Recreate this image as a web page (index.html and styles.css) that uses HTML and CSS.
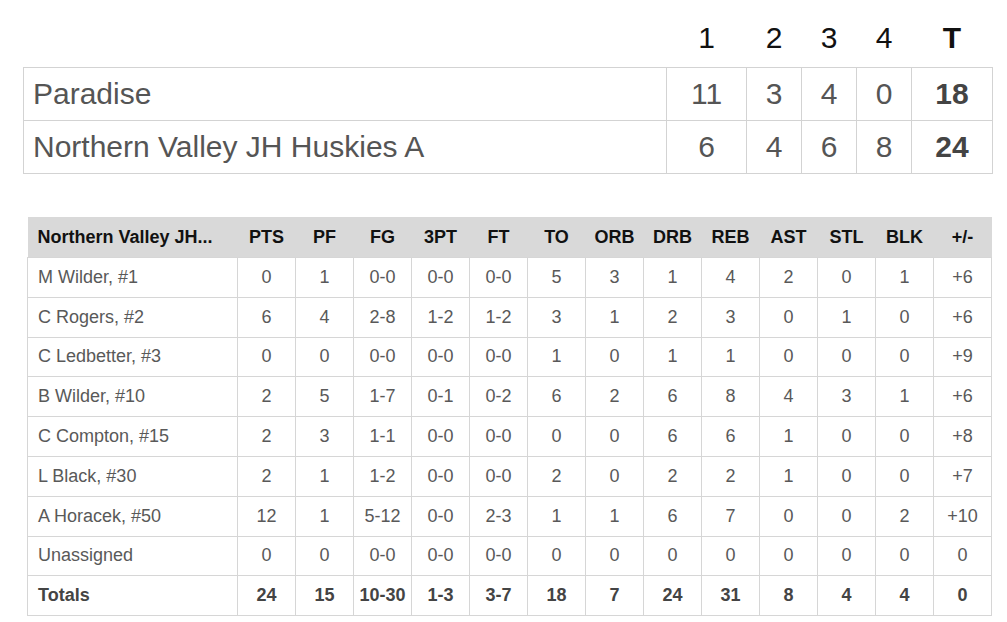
FILE: index.html
```html
<!DOCTYPE html>
<html>
<head>
<meta charset="utf-8">
<link rel="stylesheet" href="styles.css">
</head>
<body>
<div class="page">
  <table class="scoreboard">
    <colgroup>
      <col class="c-team"><col class="c-q1"><col class="c-q"><col class="c-q"><col class="c-q"><col class="c-t">
    </colgroup>
    <thead>
      <tr><th></th><th>1</th><th>2</th><th>3</th><th>4</th><th class="tot">T</th></tr>
    </thead>
    <tbody>
      <tr><td class="team">Paradise</td><td>11</td><td>3</td><td>4</td><td>0</td><td class="tot">18</td></tr>
      <tr><td class="team">Northern Valley JH Huskies A</td><td>6</td><td>4</td><td>6</td><td>8</td><td class="tot">24</td></tr>
    </tbody>
  </table>

  <table class="box">
    <colgroup>
      <col class="c-name">
      <col><col><col><col><col><col><col><col><col><col><col><col><col>
    </colgroup>
    <thead>
      <tr><th class="name">Northern Valley JH...</th><th>PTS</th><th>PF</th><th>FG</th><th>3PT</th><th>FT</th><th>TO</th><th>ORB</th><th>DRB</th><th>REB</th><th>AST</th><th>STL</th><th>BLK</th><th>+/-</th></tr>
    </thead>
    <tbody>
      <tr><td class="name">M Wilder, #1</td><td>0</td><td>1</td><td>0-0</td><td>0-0</td><td>0-0</td><td>5</td><td>3</td><td>1</td><td>4</td><td>2</td><td>0</td><td>1</td><td>+6</td></tr>
      <tr><td class="name">C Rogers, #2</td><td>6</td><td>4</td><td>2-8</td><td>1-2</td><td>1-2</td><td>3</td><td>1</td><td>2</td><td>3</td><td>0</td><td>1</td><td>0</td><td>+6</td></tr>
      <tr><td class="name">C Ledbetter, #3</td><td>0</td><td>0</td><td>0-0</td><td>0-0</td><td>0-0</td><td>1</td><td>0</td><td>1</td><td>1</td><td>0</td><td>0</td><td>0</td><td>+9</td></tr>
      <tr><td class="name">B Wilder, #10</td><td>2</td><td>5</td><td>1-7</td><td>0-1</td><td>0-2</td><td>6</td><td>2</td><td>6</td><td>8</td><td>4</td><td>3</td><td>1</td><td>+6</td></tr>
      <tr><td class="name">C Compton, #15</td><td>2</td><td>3</td><td>1-1</td><td>0-0</td><td>0-0</td><td>0</td><td>0</td><td>6</td><td>6</td><td>1</td><td>0</td><td>0</td><td>+8</td></tr>
      <tr><td class="name">L Black, #30</td><td>2</td><td>1</td><td>1-2</td><td>0-0</td><td>0-0</td><td>2</td><td>0</td><td>2</td><td>2</td><td>1</td><td>0</td><td>0</td><td>+7</td></tr>
      <tr><td class="name">A Horacek, #50</td><td>12</td><td>1</td><td>5-12</td><td>0-0</td><td>2-3</td><td>1</td><td>1</td><td>6</td><td>7</td><td>0</td><td>0</td><td>2</td><td>+10</td></tr>
      <tr><td class="name">Unassigned</td><td>0</td><td>0</td><td>0-0</td><td>0-0</td><td>0-0</td><td>0</td><td>0</td><td>0</td><td>0</td><td>0</td><td>0</td><td>0</td><td>0</td></tr>
      <tr class="totals"><td class="name">Totals</td><td>24</td><td>15</td><td>10-30</td><td>1-3</td><td>3-7</td><td>18</td><td>7</td><td>24</td><td>31</td><td>8</td><td>4</td><td>4</td><td>0</td></tr>
    </tbody>
  </table>
</div>
</body>
</html>
```

FILE: styles.css
```css
html, body {
  margin: 0;
  padding: 0;
  background: #ffffff;
}

body {
  font-family: "Liberation Sans", Arial, sans-serif;
  color: #555555;
}

.page {
  padding: 21px 0 0 0;
}

table {
  border-collapse: collapse;
  table-layout: fixed;
}

/* Scoreboard */
.scoreboard {
  margin-left: 23px;
  width: 970px;
  font-size: 30px;
}

.scoreboard .c-team { width: 643px; }
.scoreboard .c-q1 { width: 80px; }
.scoreboard .c-q { width: 55px; }
.scoreboard .c-t { width: 81px; }

.scoreboard th {
  font-weight: normal;
  color: #111111;
  line-height: 34px;
  padding: 0 0 12px 0;
  text-align: center;
}

.scoreboard th.tot {
  font-weight: bold;
}

.scoreboard td {
  border: 1px solid #d3d3d3;
  height: 52px;
  padding: 0;
  text-align: center;
  line-height: 34px;
  color: #555555;
}

.scoreboard td.team {
  text-align: left;
  padding-left: 9px;
}

.scoreboard td.tot {
  font-weight: bold;
  color: #444444;
}

/* Box score */
.box {
  margin: 43px 0 0 27px;
  width: 965px;
  font-size: 18px;
}

.box .c-name { width: 210px; }

.box thead th {
  background: #d9d9d9;
  color: #111111;
  font-weight: bold;
  height: 40px;
  padding: 0;
  text-align: center;
  white-space: nowrap;
}

.box thead th.name {
  text-align: left;
  padding-left: 10px;
}

.box tbody td {
  border: 1px solid #d6d6d6;
  height: 38.8px;
  padding: 0;
  text-align: center;
  color: #595959;
  white-space: nowrap;
}

.box tbody td.name {
  text-align: left;
  padding-left: 10px;
}

.box tbody tr.totals td {
  font-weight: bold;
  color: #444444;
}
```
